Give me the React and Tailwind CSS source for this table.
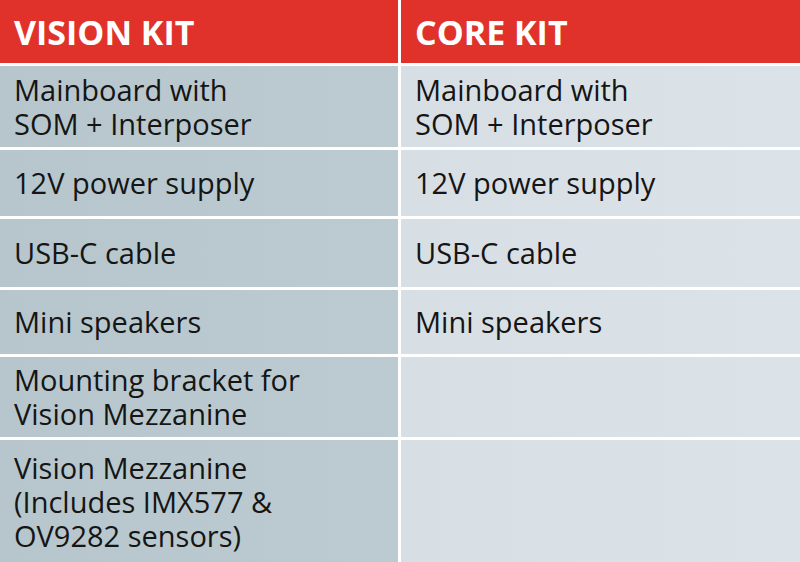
import React from "react";

const rows = [
  { left: ["Mainboard with", "SOM + Interposer"], right: ["Mainboard with", "SOM + Interposer"], h: "h-[81px]" },
  { left: ["12V power supply"], right: ["12V power supply"], h: "h-[66px]" },
  { left: ["USB-C cable"], right: ["USB-C cable"], h: "h-[68px]" },
  { left: ["Mini speakers"], right: ["Mini speakers"], h: "h-[64px]" },
  { left: ["Mounting bracket for", "Vision Mezzanine"], right: [], h: "h-[80px]" },
];

function Cell({ lines, side, className = "" }) {
  const bg =
    side === "left"
      ? "bg-gradient-to-r from-[#b6c6cc] to-[#bccbd1]"
      : "bg-gradient-to-r from-[#d7dfe4] to-[#dce3e8]";
  return (
    <div className={`flex flex-col justify-center pl-[14px] ${bg} ${className}`}>
      {lines.map((l) => (
        <span key={l} className="block">
          {l}
        </span>
      ))}
    </div>
  );
}

export default function App() {
  return (
    <div
      className="w-[800px] h-[562px] overflow-hidden bg-white text-[29px] leading-[34px] text-[#151515]"
      style={{ fontFamily: '"Open Sans", "Noto Sans", sans-serif' }}
    >
      <div className="grid grid-cols-[398px_399px] gap-x-[3px] gap-y-[3px]">
        {/* header */}
        <div className="h-[63px] flex items-center pl-[14px] bg-[#e0322a] text-white font-bold text-[34px]">
          VISION KIT
        </div>
        <div className="h-[63px] flex items-center pl-[14px] bg-[#e0322a] text-white font-bold text-[34px]">
          CORE KIT
        </div>

        {rows.map((r, i) => (
          <React.Fragment key={i}>
            <Cell lines={r.left} side="left" className={r.h} />
            <Cell lines={r.right} side="right" className={r.h} />
          </React.Fragment>
        ))}

        {/* last row */}
        <div className="h-[130px] pl-[14px] pt-[11px] bg-gradient-to-r from-[#b6c6cc] to-[#bccbd1]">
          <span className="block">Vision Mezzanine</span>
          <span className="block">(Includes IMX577 &amp;</span>
          <span className="block">OV9282 sensors)</span>
        </div>
        <div className="h-[130px] bg-gradient-to-r from-[#d7dfe4] to-[#dce3e8]" />
      </div>
    </div>
  );
}
